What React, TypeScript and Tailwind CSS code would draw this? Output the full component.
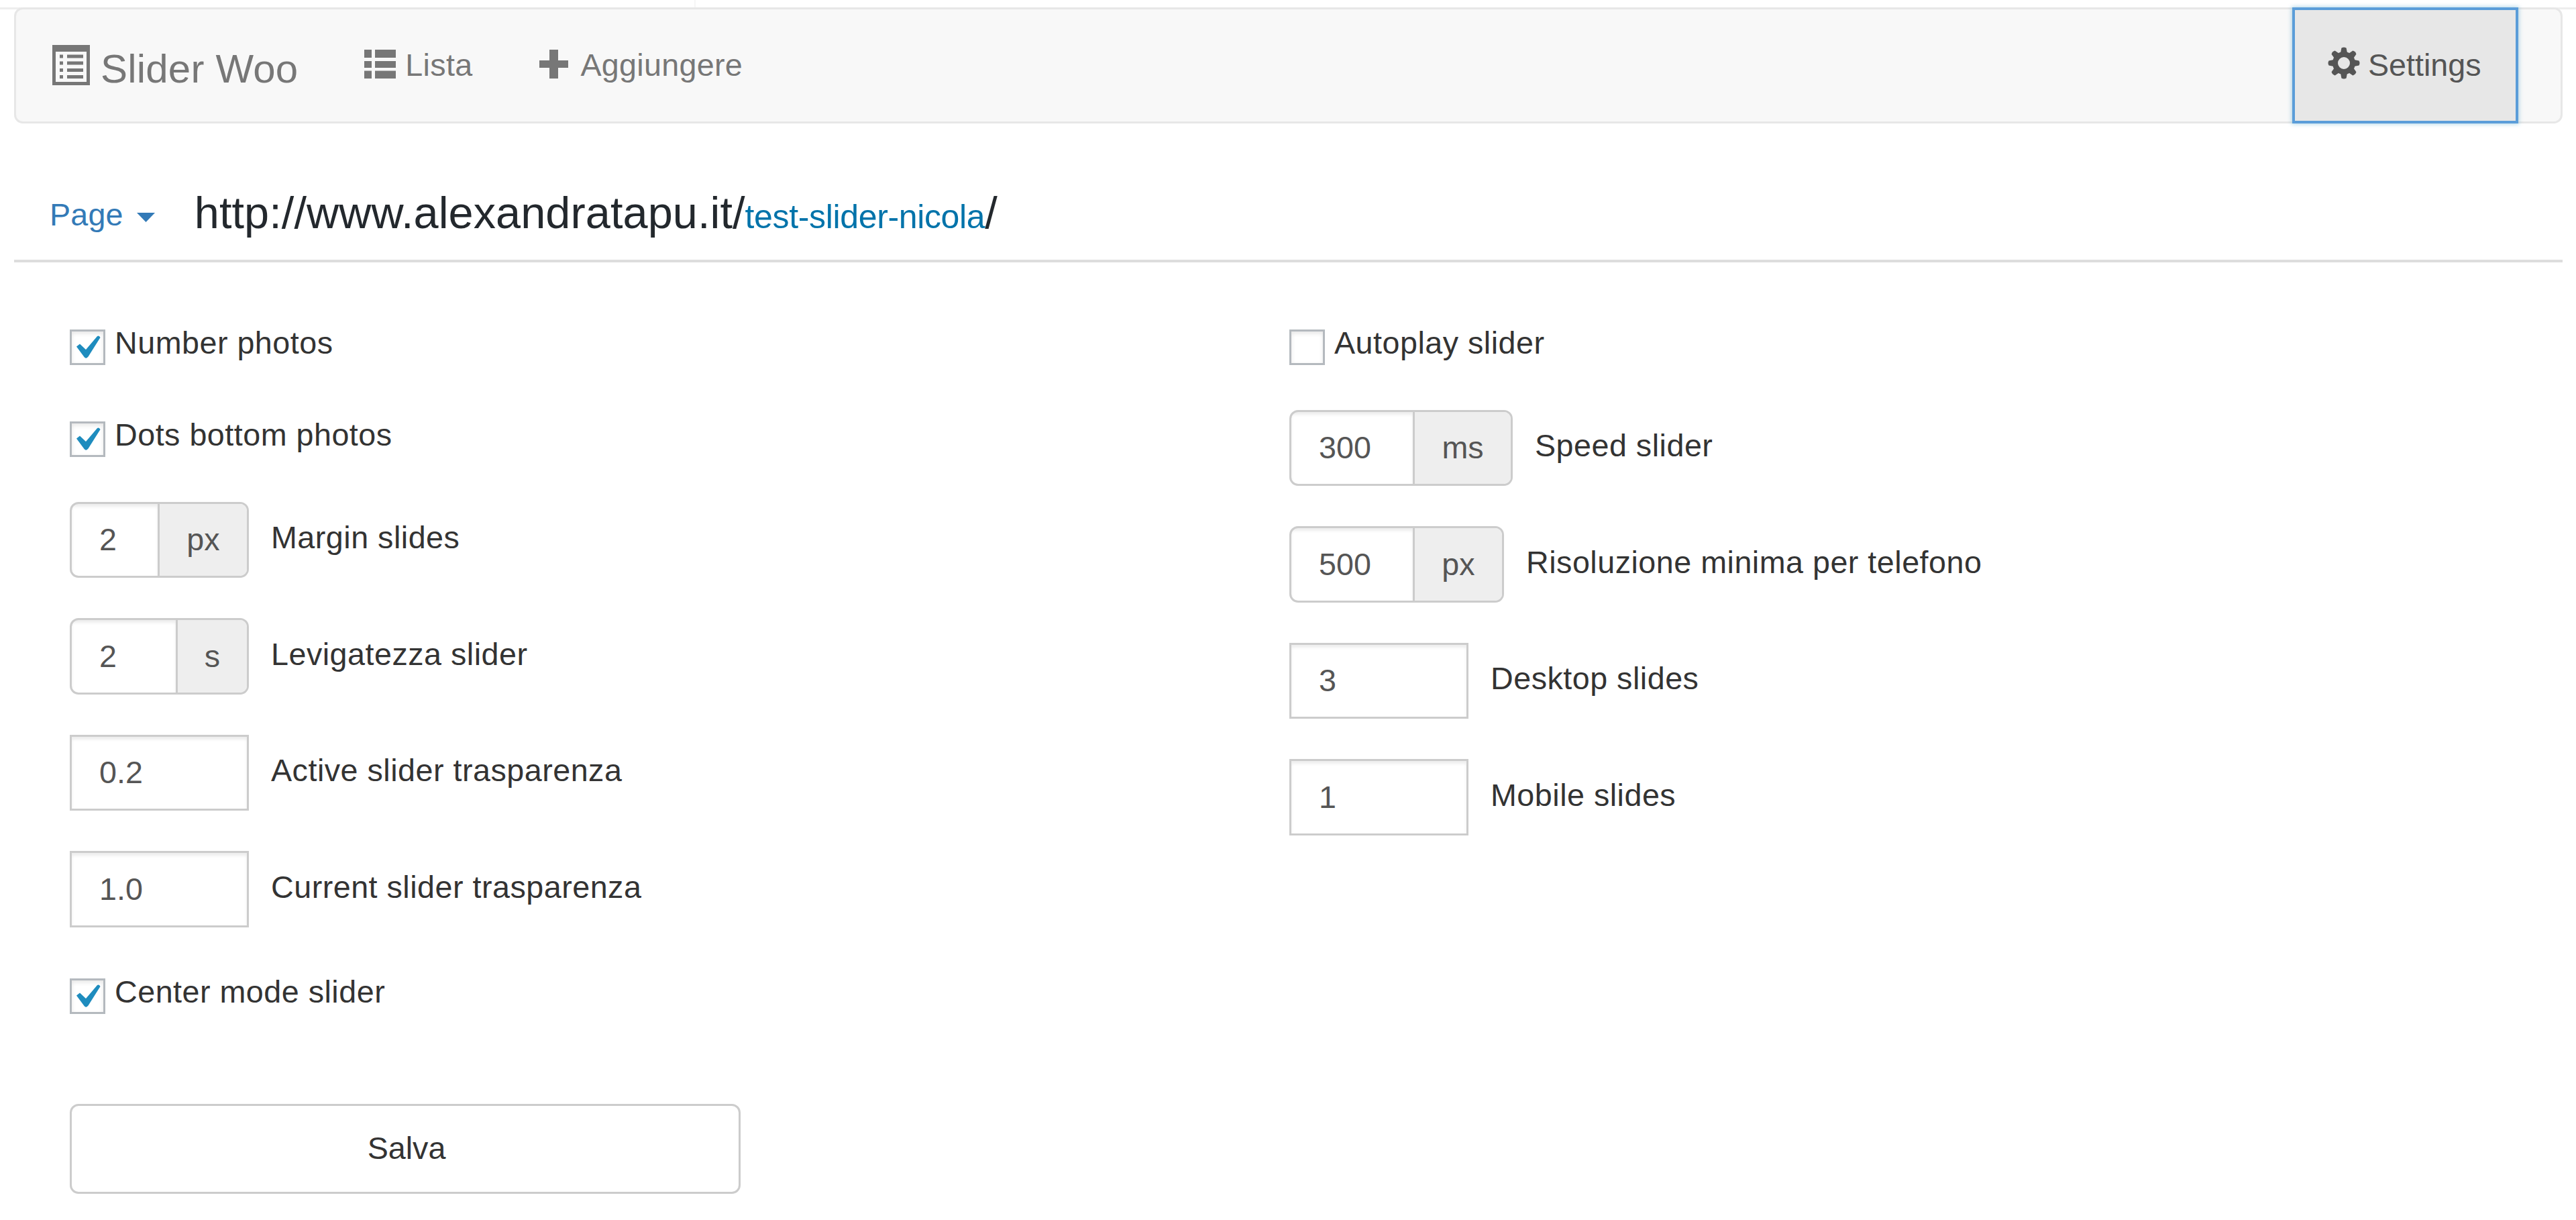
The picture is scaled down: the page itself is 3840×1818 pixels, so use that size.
import type { ReactNode } from 'react';

const ListAltIcon = () => (
    <svg width="56" height="60" viewBox="0 0 56 60" fill="currentColor" className="shrink-0">
        <path fillRule="evenodd" d="M0 0H56V60H0ZM5 10V55H51V10Z" />
        <path d="M11 14.5h5v5h-5zM22 14.5h24v5H22zM11 24.5h5v5h-5zM22 24.5h24v5H22zM11 35h5v5h-5zM22 35h24v5H22zM11 45h5v5h-5zM22 45h24v5H22z" />
    </svg>
);

const ListIcon = () => (
    <svg width="47" height="43" viewBox="0 0 47 43" fill="currentColor" className="shrink-0">
        <path d="M0 0h11v12H0zM16 0h31v12H16zM0 17h11v10H0zM16 17h31v10H16zM0 31.5h11v11.5H0zM16 31.5h31v11.5H16z" />
    </svg>
);

const PlusIcon = () => (
    <svg width="43" height="43" viewBox="0 0 43 43" fill="currentColor" className="shrink-0">
        <path d="M15 0H28V16H43V27H28V43H15V27H0V16H15Z" />
    </svg>
);

const CogIcon = () => (
    <svg width="48" height="48" viewBox="-24 -24 48 48" fill="currentColor" className="shrink-0">
        <circle r="13" fill="none" stroke="currentColor" strokeWidth="8" />
        {[0, 45, 90, 135, 180, 225, 270, 315].map((angle) => (
            <path key={angle} d="M-5 -15L-3.6 -22.5Q0 -24.5 3.6 -22.5L5 -15Z" transform={`rotate(${angle})`} />
        ))}
    </svg>
);

const Label = ({ children }: { children: ReactNode }) => (
    <span className="whitespace-nowrap leading-none tracking-[0.5px] text-[#333]">{children}</span>
);

interface CheckFieldProps {
    label: string;
    checked?: boolean;
}

const CheckField = ({ label, checked }: CheckFieldProps) => (
    <div className="flex h-[53px] items-center">
        <span className="h-[53px] w-[53px] shrink-0 border-[3px] border-[#b4b9be] bg-white shadow-[inset_0_3px_6px_rgba(0,0,0,0.1)]">
            {checked && (
                <svg width="47" height="47" viewBox="3.5 3.5 47 47" fill="#1e8cbe">
                    <path d="M10.5 26L15.5 22L24.5 30.5L41.5 10.5Q44 9 46 12.5L28 41Q25 45 22 41.5Z" />
                </svg>
            )}
        </span>
        <div className="flex pb-3 pl-3.5">
            <Label>{label}</Label>
        </div>
    </div>
);

interface NumberFieldProps {
    label: string;
    value: string;
    unit?: string;
    // width of the text part, unit excluded
    inputClass: string;
    unitClass?: string;
}

const NumberField = ({ label, value, unit, inputClass, unitClass }: NumberFieldProps) => (
    <div className="flex h-[113.4px] items-center">
        <div className={`flex h-full border-[3px] border-[#ccc] text-[#555] ${unit ? 'overflow-hidden rounded-[13px]' : ''}`}>
            <div className={`flex items-center pl-[41px] leading-none shadow-[inset_0_4px_4px_rgba(0,0,0,0.075)] ${inputClass}`}>{value}</div>
            {unit && (
                <div className={`flex items-center justify-center border-l-[3px] border-[#ccc] bg-[#eee] leading-none ${unitClass}`}>{unit}</div>
            )}
        </div>
        <div className="flex pb-1.5 pl-[33px]">
            <Label>{label}</Label>
        </div>
    </div>
);

export default function App() {
    return (
        <div className="min-h-[1818px] w-[3840px] bg-white font-['Liberation_Sans',Arial,sans-serif] text-[46.67px]">
            <div className="flex h-[14px] border-b-[3px] border-[#eee]">
                <div className="w-[1037px] border-r-2 border-[#f6f6f6]" />
            </div>

            <nav className="-mt-[3px] mr-5 ml-[21px] flex h-[173px] items-start rounded-[13px] border-[3px] border-[#e7e7e7] bg-[#f8f8f8] text-[#777]">
                <div className="flex gap-4 pt-[53px] pl-[54px]">
                    <ListAltIcon />
                    <span className="pt-1.5 text-[60px] leading-none tracking-[0.2px]">Slider Woo</span>
                </div>
                <div className="flex gap-[14px] pt-[60px] pl-[99px] leading-none tracking-[0.3px]">
                    <ListIcon />
                    <span>Lista</span>
                </div>
                <div className="flex gap-[18px] pt-[60px] pl-[100px] leading-none tracking-[0.3px]">
                    <PlusIcon />
                    <span>Aggiungere</span>
                </div>
                <div className="-mt-[3px] mr-[63px] ml-auto flex h-[173px] w-[337px] gap-3 border-[4px] border-[#5b9dd9] bg-[#e7e7e7] pt-[55px] pl-[49px] leading-none text-[#555] shadow-[0_0_6px_1px_rgba(30,140,190,0.35)]">
                    <CogIcon />
                    <span className="pt-1">Settings</span>
                </div>
            </nav>

            <header className="mr-5 ml-[21px] flex h-[207px] items-baseline border-b-[4px] border-[#ddd] pt-[100px] leading-none whitespace-nowrap">
                <span className="relative -top-1 flex items-center pl-[53px] tracking-[0.2px] text-[#337ab7]">
                    Page
                    <svg width="27" height="14" viewBox="0 0 27 14" fill="currentColor" className="mt-2 ml-5">
                        <path d="M0 0H27L13.5 14Z" />
                    </svg>
                </span>
                <h1 className="pl-[59px] text-[66.67px] tracking-[0.07px] text-[#23282d]">
                    http://www.alexandratapu.it/
                    <span className="text-[50px] tracking-[-0.35px] text-[#0073aa]">test-slider-nicola</span>/
                </h1>
            </header>

            <main className="flex pt-[100px] pl-[104px]">
                <div className="w-[1818px]">
                    <CheckField label="Number photos" checked />
                    <div className="h-[84px]" />
                    <CheckField label="Dots bottom photos" checked />
                    <div className="mt-[67px] flex flex-col gap-[60px]">
                        <NumberField label="Margin slides" value="2" unit="px" inputClass="w-[128px]" unitClass="w-[133px]" />
                        <NumberField label="Levigatezza slider" value="2" unit="s" inputClass="w-[155px]" unitClass="w-[106px]" />
                        <NumberField label="Active slider trasparenza" value="0.2" inputClass="w-[261px]" />
                        <NumberField label="Current slider trasparenza" value="1.0" inputClass="w-[261px]" />
                    </div>
                    <div className="mt-[76px]">
                        <CheckField label="Center mode slider" checked />
                    </div>
                    <button className="mt-[134px] block h-[134px] w-[1000px] rounded-[13px] border-[3px] border-[#ccc] bg-white pl-1 text-center leading-none text-[#333]">
                        Salva
                    </button>
                </div>

                <div>
                    <CheckField label="Autoplay slider" />
                    <div className="mt-[67px] flex flex-col gap-[60px]">
                        <NumberField label="Speed slider" value="300" unit="ms" inputClass="w-[181px]" unitClass="w-[146px]" />
                        <NumberField label="Risoluzione minima per telefono" value="500" unit="px" inputClass="w-[181px]" unitClass="w-[133px]" />
                        <NumberField label="Desktop slides" value="3" inputClass="w-[261px]" />
                        <NumberField label="Mobile slides" value="1" inputClass="w-[261px]" />
                    </div>
                </div>
            </main>
        </div>
    );
}
